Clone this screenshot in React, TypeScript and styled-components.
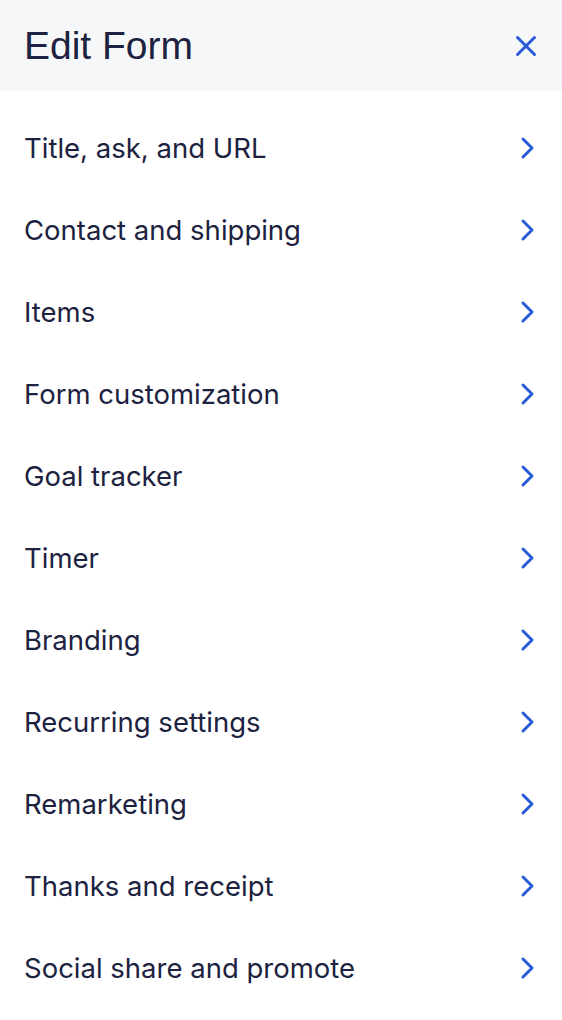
import * as React from 'react';
import styled, { createGlobalStyle } from 'styled-components';

const GlobalStyle = createGlobalStyle`
  body {
    margin: 0;
    background: #ffffff;
    font-family: Inter, "Liberation Sans", sans-serif;
  }
`;

const Panel = styled.div`
  width: 562px;
  display: flex;
  flex-direction: column;
`;

const Header = styled.header`
  height: 91px;
  background: #f6f7f9;
  display: flex;
  align-items: center;
  justify-content: space-between;
  padding: 0 24px;
  box-sizing: border-box;
`;

const Title = styled.h1`
  margin: 0;
  font-family: "Liberation Sans", Arial, sans-serif;
  font-weight: 400;
  font-size: 39px;
  color: #1c2240;
`;

const CloseButton = styled.button`
  border: 0;
  background: none;
  padding: 0;
  width: 24px;
  height: 24px;
  display: flex;
  align-items: center;
  justify-content: center;
  cursor: pointer;
`;

const List = styled.ul`
  list-style: none;
  margin: 0;
  padding: 16px 0 0;
`;

const Row = styled.li`
  height: 82px;
  display: flex;
  align-items: center;
  justify-content: space-between;
  padding: 0 26px 0 24px;
  cursor: pointer;
`;

const Label = styled.span`
  font-size: 27.5px;
  color: #1c2240;
`;

const items = [
  'Title, ask, and URL',
  'Contact and shipping',
  'Items',
  'Form customization',
  'Goal tracker',
  'Timer',
  'Branding',
  'Recurring settings',
  'Remarketing',
  'Thanks and receipt',
  'Social share and promote',
];

const Chevron = () => (
  <svg width="16" height="24" viewBox="0 0 16 24" fill="none">
    <path d="M3 3l9 9-9 9" stroke="#2a5bd7" strokeWidth="3" strokeLinecap="round" strokeLinejoin="round" />
  </svg>
);

const CloseIcon = () => (
  <svg width="24" height="24" viewBox="0 0 24 24" fill="none">
    <path d="M3.5 3.5l17 17M20.5 3.5l-17 17" stroke="#2a5bd7" strokeWidth="3" strokeLinecap="round" />
  </svg>
);

const App = () => (
  <React.Fragment>
    <GlobalStyle />
    <Panel>
      <Header>
        <Title>Edit Form</Title>
        <CloseButton aria-label="Close">
          <CloseIcon />
        </CloseButton>
      </Header>
      <List>
        {items.map((item) => (
          <Row key={item}>
            <Label>{item}</Label>
            <Chevron />
          </Row>
        ))}
      </List>
    </Panel>
  </React.Fragment>
);

export default App;
